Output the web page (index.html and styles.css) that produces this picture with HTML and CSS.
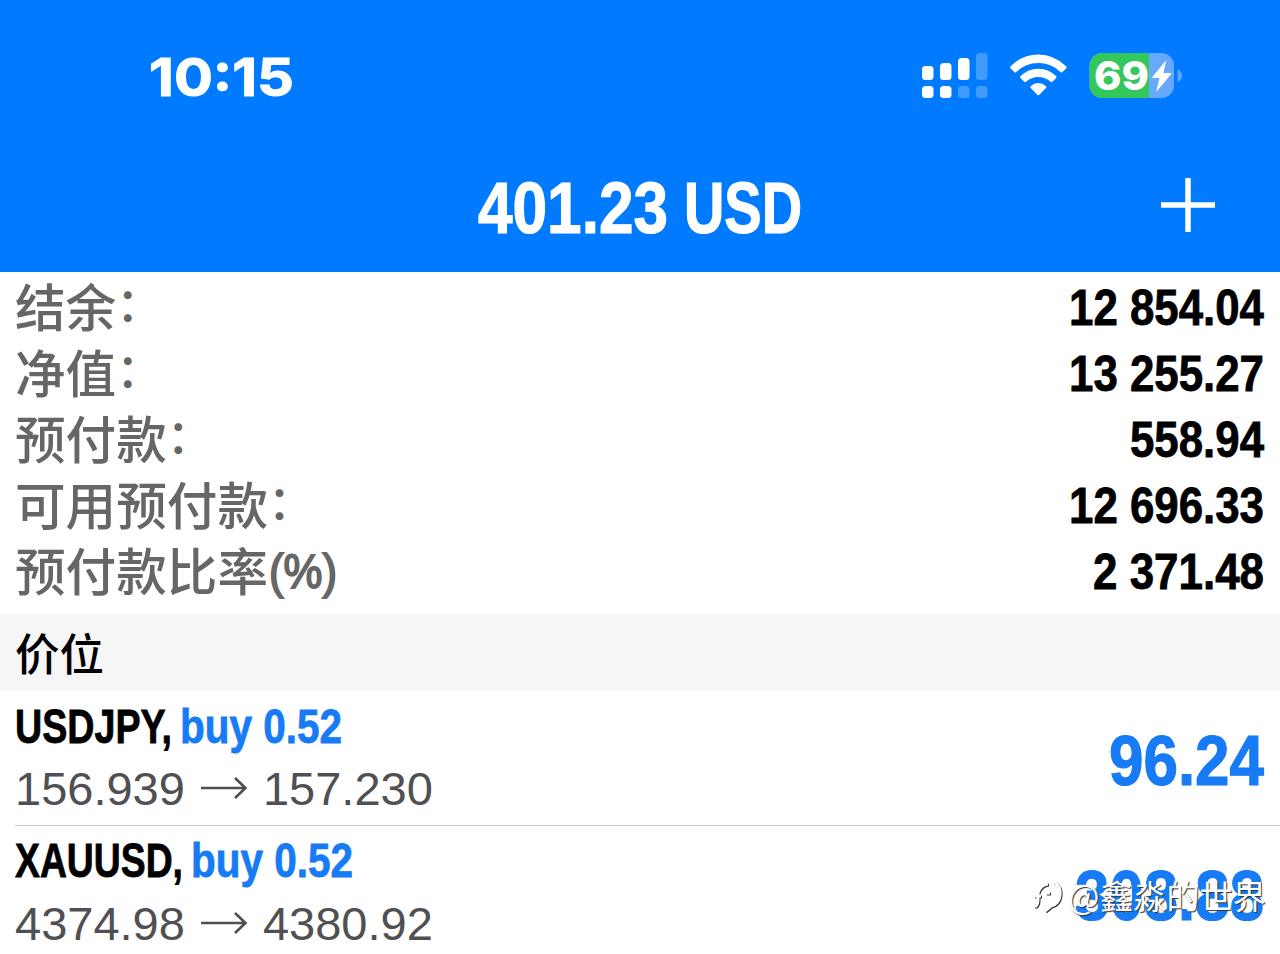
FILE: index.html
```
<!DOCTYPE html>
<html lang="zh-CN">
<head>
<meta charset="utf-8">
<title>401.23 USD</title>
<link rel="stylesheet" href="styles.css">
</head>
<body>
<div class="screen">
  <header class="header">
    <div class="status">
      <svg class="clock" width="160" height="60"><text x="1" y="48" textLength="145" lengthAdjust="spacingAndGlyphs">10:15</text></svg>
      <div class="indicators">
        <svg width="68" height="48" viewBox="920 52 68 48" fill="#fff">
          <rect x="922" y="66" width="11.5" height="14" rx="3.5"/><rect x="940" y="63" width="11.5" height="17" rx="3.5"/><rect x="958" y="58" width="11.5" height="22" rx="3.5"/>
          <rect x="976" y="53" width="11.5" height="27" rx="3.5" opacity=".25"/>
          <rect x="922" y="86" width="11.5" height="12" rx="3.5"/><rect x="940" y="86" width="11.5" height="12" rx="3.5"/>
          <rect x="958" y="86" width="11.5" height="12" rx="3.5" opacity=".25"/><rect x="976" y="86" width="11.5" height="12" rx="3.5" opacity=".25"/>
        </svg>
        <svg width="60" height="48" viewBox="1008 52 60 48" fill="#fff">
          <path d="M1010.7 66.3Q1009.6 67.4 1010.7 68.5L1014.2 71.9Q1015.2 72.9 1016.3 71.9Q1025.5 63 1038.3 63T1060.3 71.9Q1061.4 72.9 1062.4 71.9L1066 68.5Q1067.1 67.4 1066 66.3Q1054.2 54.5 1038.3 54.5T1010.7 66.3Z"/>
          <path d="M1020.6 76.1Q1019.5 77.2 1020.6 78.3L1024.2 81.7Q1025.2 82.6 1026.3 81.6Q1031.4 77 1038.3 77T1050.3 81.6Q1051.4 82.6 1052.4 81.7L1056 78.3Q1057.1 77.2 1056 76.1Q1048.5 68.7 1038.3 68.7T1020.6 76.1Z"/>
          <path d="M1030.6 86.2Q1029.7 87.2 1030.7 88.1L1037.3 94.7Q1038.3 95.7 1039.3 94.7L1046 88.1Q1047 87.2 1046 86.2Q1042.6 83 1038.3 83T1030.6 86.2Z"/>
        </svg>
        <svg class="battery" width="96" height="48" viewBox="1088 52 96 48">
          <defs><clipPath id="shell"><rect x="1089.5" y="53" width="84.5" height="45" rx="12.5"/></clipPath></defs>
          <g clip-path="url(#shell)"><rect x="1089" y="53" width="86" height="45" fill="#66a9ff"/><rect x="1089" y="53" width="60" height="45" fill="#34c75c"/></g>
          <path d="M1177.5 69Q1182 70.5 1182 75.5T1177.5 82Z" fill="#5ba5ff"/>
          <text x="1094" y="90" textLength="55" lengthAdjust="spacingAndGlyphs">69</text>
          <path d="M1165.5 61.5L1152.5 77.5H1160L1157 90.5L1171 73.5H1162.8Z" fill="#fff" stroke="#fff" stroke-linejoin="round"/>
        </svg>
      </div>
    </div>
    <div class="titlebar">
      <svg class="title" width="330" height="84"><text x="3" y="62" textLength="190" lengthAdjust="spacingAndGlyphs">401.23</text><text x="209" y="62" textLength="118" lengthAdjust="spacingAndGlyphs">USD</text></svg>
      <svg class="plus" width="56" height="56" viewBox="0 0 56 56"><path d="M1 28H55M28 1V55" stroke="#fff" stroke-width="5.5"/></svg>
    </div>
  </header>
  <main>
    <section class="summary">
      <div class="row"><span class="label">结余<span class="colon">：</span></span><svg class="value" width="204" height="60"><text x="5" y="47" textLength="195" lengthAdjust="spacingAndGlyphs">12 854.04</text></svg></div>
      <div class="row"><span class="label">净值<span class="colon">：</span></span><svg class="value" width="204" height="60"><text x="5" y="47" textLength="195" lengthAdjust="spacingAndGlyphs">13 255.27</text></svg></div>
      <div class="row"><span class="label">预付款<span class="colon">：</span></span><svg class="value" width="204" height="60"><text x="66" y="47" textLength="134" lengthAdjust="spacingAndGlyphs">558.94</text></svg></div>
      <div class="row"><span class="label">可用预付款<span class="colon">：</span></span><svg class="value" width="204" height="60"><text x="5" y="47" textLength="195" lengthAdjust="spacingAndGlyphs">12 696.33</text></svg></div>
      <div class="row"><span class="label">预付款比率<svg class="unit" width="76" height="64"><text x="1" y="49" textLength="68" lengthAdjust="spacingAndGlyphs">(%)</text></svg></span><svg class="value" width="204" height="60"><text x="29" y="47" textLength="171" lengthAdjust="spacingAndGlyphs">2 371.48</text></svg></div>
    </section>
    <h2 class="section">价位</h2>
    <article class="position">
      <div class="details">
        <svg class="symbol" width="400" height="62"><text x="0" y="47" textLength="157" lengthAdjust="spacingAndGlyphs">USDJPY,</text><text class="side" x="165" y="47" textLength="162" lengthAdjust="spacingAndGlyphs">buy 0.52</text></svg>
        <div class="prices"><span>156.939</span><svg class="arrow" width="48" height="24" viewBox="0 0 48 24"><path d="M1 12H45M35 2L45.5 12L35 22"/></svg><span>157.230</span></div>
      </div>
      <svg class="profit" width="204" height="84"><text x="45" y="64" textLength="155" lengthAdjust="spacingAndGlyphs">96.24</text></svg>
    </article>
    <article class="position">
      <div class="details">
        <svg class="symbol" width="400" height="62"><text x="0" y="46" textLength="168" lengthAdjust="spacingAndGlyphs">XAUUSD,</text><text class="side" x="176" y="46" textLength="162" lengthAdjust="spacingAndGlyphs">buy 0.52</text></svg>
        <div class="prices"><span>4374.98</span><svg class="arrow" width="48" height="24" viewBox="0 0 48 24"><path d="M1 12H45M35 2L45.5 12L35 22"/></svg><span>4380.92</span></div>
      </div>
      <svg class="profit" width="204" height="84"><text x="11" y="64" textLength="189" lengthAdjust="spacingAndGlyphs">308.88</text></svg>
    </article>
  </main>
  <div class="watermark">
    <svg width="32" height="40" viewBox="0 0 32 40"><path d="M2 31H4Q6 29 6 24V18Q8 10 16 9M2 21H9M14 18H18M22 7Q29 11 28 20Q27 29 19 31L13 36"/></svg>
    <span class="at">@</span><span>鑫淼的世界</span>
  </div>
</div>
</body>
</html>
```
FILE: styles.css
```
body { margin: 0; background: #fff; }
svg { display: block; flex: none; }
.screen {
  position: relative;
  width: 1280px;
  height: 954px;
  overflow: hidden;
  background: #fff;
  color: #000;
  font-family: "Liberation Sans", "Noto Sans CJK SC", sans-serif;
}
.header { height: 272px; background: #007aff; color: #fff; }
.status { display: flex; justify-content: space-between; padding: 48px 96px 0 148px; height: 60px; }
.clock text { font: 700 52.5px Inter, sans-serif; fill: #fff; stroke: #fff; stroke-width: 1; }
.indicators { display: flex; gap: 20px; padding-top: 4px; }
.battery text { font: 800 40px Inter, sans-serif; fill: #fff; }
.titlebar {
  display: grid;
  grid-template-columns: 1fr 330px 1fr;
  align-items: center;
  height: 80px;
  padding: 63px 64px 0;
}
.title { grid-column: 2; }
.title text { font-weight: 700; font-size: 72px; fill: #fff; stroke: #fff; stroke-width: 1.2; }
.plus { justify-self: end; margin-bottom: 16px; }
.summary { padding: 6px 12px 6px 15px; }
.row { display: flex; justify-content: space-between; height: 66px; }
.label {
  display: flex;
  margin-top: -3px;
  color: #666;
  font: 500 50.6px/60px "Noto Sans CJK SC", sans-serif;
}
.colon { margin-top: -4px; font-size: 46px; }
.unit text { font: 400 49px "Liberation Sans", sans-serif; fill: #666; stroke: #666; stroke-width: 1.8; }
.value text { font-weight: 700; font-size: 50.5px; stroke: #000; stroke-width: .8; }
.section {
  margin: 0;
  height: 77px;
  padding-left: 15px;
  background: #f6f6f7;
  font: 500 44.5px/75px "Noto Sans CJK SC", sans-serif;
}
.position {
  display: flex;
  justify-content: space-between;
  box-sizing: border-box;
  height: 135px;
  margin-left: 15px;
  padding: 5px 12px 0 0;
  border-bottom: 1px solid #c8c8cb;
}
.symbol text { font-weight: 700; font-size: 48.5px; stroke: #000; stroke-width: .8; }
.symbol .side { fill: #167bf4; stroke: #167bf4; }
.profit { margin-top: 25px; }
.profit text { font-weight: 700; font-size: 71px; fill: #167bf4; stroke: #167bf4; stroke-width: 1.2; }
.prices {
  display: flex;
  align-items: center;
  gap: 15px;
  height: 60px;
  color: #505053;
  font-size: 47px;
}
.arrow path { fill: none; stroke: #505053; stroke-width: 2.6; }
.watermark {
  position: absolute;
  right: 14px;
  bottom: 35px;
  display: flex;
  align-items: center;
  height: 48px;
  color: #fff;
  font: 400 33.2px/48px "Noto Sans CJK SC", sans-serif;
  text-shadow: 1px 1px 1px #333;
}
.watermark svg { margin-right: 4px; filter: drop-shadow(1px 1px .5px #333); }
.watermark path { fill: none; stroke: #fff; stroke-width: 3; }
.at { width: 32px; }
```
